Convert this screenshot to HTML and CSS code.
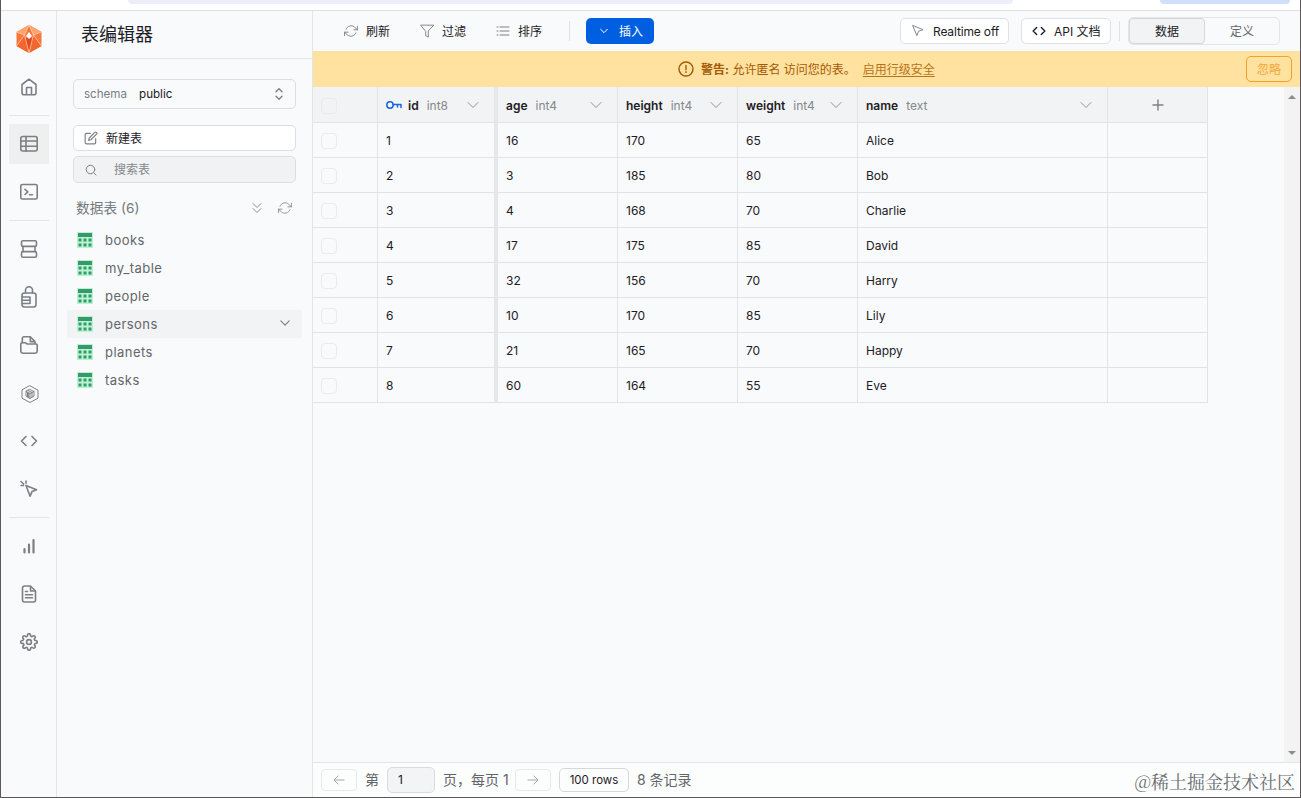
FILE: index.html
```html
<!DOCTYPE html>
<html lang="zh-CN">
<head>
  <meta charset="UTF-8">
  <meta name="viewport" content="width=device-width, initial-scale=1.0">
  <title>表编辑器</title>
  <link rel="stylesheet" href="styles.css">
</head>
<body>
  <svg class="sprite">
    <symbol id="chevron" viewBox="0 0 12 12"><path d="M1 3.500l5 5 5-5"/></symbol>
    <symbol id="refresh" viewBox="0 0 24 24"><path d="M23 4v6h-6M1 20v-6h6"/><path d="M3.500 9a9 9 0 0 1 14.900-3.400L23 10M1 14l4.600 4.400A9 9 0 0 0 20.500 15"/></symbol>
    <symbol id="code" viewBox="0 0 24 24"><path d="M16 18l6-6-6-6M8 6l-6 6 6 6"/></symbol>
    <symbol id="cursor" viewBox="0 0 24 24"><path d="M3 3l7.100 17 2.500-7.400L20 10z"/></symbol>
    <symbol id="table" viewBox="0 0 16 16">
      <rect width="16" height="16" fill="#b9f3d3"/>
      <path fill="#369a68" d="M1 1h14v4H1zM1.500 6.500h3v3h-3zM6.500 6.500h3v3h-3zM11.500 6.500h3v3h-3zM1.500 11.500h3v3h-3zM6.500 11.500h3v3h-3zM11.500 11.500h3v3h-3z"/>
    </symbol>
  </svg>

  <div class="browser">
    <div class="address"></div>
    <div class="update"></div>
  </div>

  <div class="app">
    <nav class="nav">
      <a class="nav-item logo">
        <svg width="26" height="28" viewBox="0 0 26 28">
          <path fill="#f9763d" d="M13 0l12.500 7v14L13 28 .5 21V7z"/>
          <path fill="#fba46c" d="M13 0L.5 7l8 3zM13 0l12.500 7-8 3z"/>
          <path fill="#f5662f" d="M.5 21L8.500 10l4.500 18zM25.500 21l-8-11L13 28z"/>
          <path fill="#df4a1e" d="M13 10l4 5-4 13-4-13z"/>
          <path fill="none" stroke="#ffd0ac" stroke-width=".8" d="M13 0L8.500 10 .5 7M13 0l4.500 10 8-3M8.500 10l-8 11M17.500 10l8 11M8.500 10L13 28l4.500-18"/>
          <path fill="#fff" d="M13 7l3 4-3 3-3-3z"/>
        </svg>
      </a>
      <a class="nav-item">
        <svg class="icon" width="18" height="18" viewBox="0 0 18 18"><path d="M9 1.200L2 6.500v8.300a2 2 0 0 0 2 2h10a2 2 0 0 0 2-2V6.500zM6.500 16.500V9.500h5v7"/></svg>
      </a>
      <hr>
      <a class="nav-item active">
        <svg class="icon" width="18" height="18" viewBox="0 0 18 18"><rect x=".8" y="1.500" width="16.400" height="14.500" rx="2"/><path d="M1 6h16M1 11.300h16M6 1.500V16"/></svg>
      </a>
      <a class="nav-item">
        <svg class="icon" width="18" height="18" viewBox="0 0 18 18"><rect x=".8" y="1.500" width="16.400" height="14.500" rx="1.500"/><path d="M5 6.300l2.800 2.600L5 11.500M9.500 11.800h3"/></svg>
      </a>
      <hr>
      <a class="nav-item">
        <svg class="icon" width="18" height="18" viewBox="0 0 18 18"><rect x="1.500" y=".8" width="15" height="5.600" rx="1.500"/><rect x="1.500" y="11.600" width="15" height="5.600" rx="1.500"/><path d="M3 6.400v5.200M15 6.400v5.200"/></svg>
      </a>
      <a class="nav-item">
        <svg class="icon" width="18" height="22" viewBox="0 0 18 22"><rect x="2" y="7" width="14" height="14" rx="2.500"/><path d="M5.500 7V4.200a3.500 3.500 0 0 1 7 0V7M2 11h8v6.500H2M2 14.300h8"/></svg>
      </a>
      <a class="nav-item">
        <svg class="icon" width="18" height="18" viewBox="0 0 18 18"><path d="M2.300 7V2.800a2 2 0 0 1 2-2h6L15 5.500V8M10.300 1v4.600H15M.8 8a1.200 1.200 0 0 1 1.200-1.200h3.500L7.300 8H16a1.200 1.200 0 0 1 1.200 1.200V15a2.200 2.200 0 0 1-2.200 2.200H3A2.200 2.200 0 0 1 .8 15z"/></svg>
      </a>
      <a class="nav-item functions">
        <svg class="icon thin" width="18" height="18" viewBox="0 0 18 18"><path d="M9 .8l8 4.400v8L9 17.500l-8-4.300v-8z"/><path d="M9 4.500l4 2v4.500l-4 2.500-4-2.500V6.500zM5 6.500l4 2 4-2M9 8.500v5M7 5.500l4 2v4.500M6.500 7.500V12M7.700 8v4.700"/></svg>
      </a>
      <a class="nav-item"><svg class="icon heavy" width="18" height="18"><use href="#code"/></svg></a>
      <a class="nav-item">
        <svg class="icon" width="18" height="18" viewBox="0 0 18 18"><path d="M6 5.500l10.500 4.200-4.500 1.900-1.900 4.600zM1 1.500l2.700 2.500M6 1v2.200M1 5.500h2.500"/></svg>
      </a>
      <hr>
      <a class="nav-item">
        <svg class="icon bars" width="18" height="18" viewBox="0 0 18 18"><path d="M4.500 15.500v-3.500M9 15.500V7.500M13.500 15.500V3"/></svg>
      </a>
      <a class="nav-item">
        <svg class="icon" width="18" height="18" viewBox="0 0 18 18"><path d="M10.500 1H4.500a2 2 0 0 0-2 2v12a2 2 0 0 0 2 2h9a2 2 0 0 0 2-2V6zM10.500 1v5h5M5.500 6.500h2M5.500 9.700h7M5.500 12.800h7"/></svg>
      </a>
      <a class="nav-item">
        <svg class="icon gear" width="18" height="18" viewBox="0 0 24 24"><circle cx="12" cy="12" r="3.200"/><path d="M19.400 15a1.650 1.650 0 0 0 .33 1.820l.06.06a2 2 0 1 1-2.830 2.830l-.06-.06a1.650 1.650 0 0 0-2.800 1.170V21a2 2 0 0 1-4 0v-.09a1.650 1.650 0 0 0-2.900-1.080l-.06.06a2 2 0 1 1-2.830-2.830l.06-.06A1.650 1.650 0 0 0 3.090 14H3a2 2 0 0 1 0-4h.09a1.650 1.650 0 0 0 1.180-2.800l-.06-.06a2 2 0 1 1 2.830-2.830l.06.06A1.650 1.650 0 0 0 10 3.090V3a2 2 0 0 1 4 0v.09a1.650 1.650 0 0 0 2.800 1.180l.06-.06a2 2 0 1 1 2.830 2.830l-.06.06A1.650 1.650 0 0 0 20.910 10H21a2 2 0 0 1 0 4h-.09a1.650 1.650 0 0 0-1.510 1z"/></svg>
      </a>
    </nav>

    <aside class="sidebar">
      <h1 class="sidebar-title">表编辑器</h1>
      <div class="sidebar-body">
        <div class="select">
          <span class="muted">schema</span>
          <span>public</span>
          <svg class="icon" width="10" height="14" viewBox="0 0 10 14"><path d="M2 4.800l3-3 3 3M2 9.200l3 3 3-3"/></svg>
        </div>
        <button class="field new-table">
          <svg class="icon" width="14" height="14" viewBox="0 0 24 24"><path d="M11 4H4a2 2 0 0 0-2 2v14a2 2 0 0 0 2 2h14a2 2 0 0 0 2-2v-7"/><path d="M18.500 2.500a2.100 2.100 0 0 1 3 3L12 15l-4 1 1-4z"/></svg>
          新建表
        </button>
        <div class="field search">
          <svg class="icon" width="12" height="12" viewBox="0 0 24 24"><circle cx="11" cy="11" r="8.500"/><path d="M22 22l-4.500-4.500"/></svg>
          搜索表
        </div>
        <div class="list-head">
          <span>数据表 (6)</span>
          <svg class="icon" width="12" height="14" viewBox="0 0 12 14"><path d="M2 2.500l4 4 4-4M2 7.500l4 4 4-4"/></svg>
          <svg class="icon feather" width="14" height="14"><use href="#refresh"/></svg>
        </div>
        <ul class="tables">
          <li><svg width="16" height="16"><use href="#table"/></svg>books</li>
          <li><svg width="16" height="16"><use href="#table"/></svg>my_table</li>
          <li><svg width="16" height="16"><use href="#table"/></svg>people</li>
          <li class="current"><svg width="16" height="16"><use href="#table"/></svg>persons<svg class="icon arrow" width="10" height="10"><use href="#chevron"/></svg></li>
          <li><svg width="16" height="16"><use href="#table"/></svg>planets</li>
          <li><svg width="16" height="16"><use href="#table"/></svg>tasks</li>
        </ul>
      </div>
    </aside>

    <main class="main">
      <header class="toolbar">
        <button class="tool"><svg class="icon feather" width="14" height="14"><use href="#refresh"/></svg><span>刷新</span></button>
        <button class="tool"><svg class="icon feather" width="14" height="14" viewBox="0 0 24 24"><path d="M23 2H1l8.800 10.500V20l4.400 2.500v-10z"/></svg><span>过滤</span></button>
        <button class="tool"><svg class="icon thin" width="14" height="14" viewBox="0 0 14 14"><path d="M4 3h9M4 7h9M4 11h9M1 3h1M1 7h1M1 11h1"/></svg><span>排序</span></button>
        <span class="line"></span>
        <button class="insert"><svg width="8" height="8"><use href="#chevron"/></svg><span>插入</span></button>
        <div class="toolbar-right">
          <button class="btn realtime"><svg class="icon feather" width="14" height="14"><use href="#cursor"/></svg>Realtime off</button>
          <button class="btn api"><svg class="icon" width="14" height="14"><use href="#code"/></svg><span>API 文档</span></button>
          <span class="line"></span>
          <div class="tabs">
            <button class="tab selected"><span>数据</span></button>
            <button class="tab"><span>定义</span></button>
          </div>
        </div>
      </header>

      <div class="warning">
        <svg class="icon" width="16" height="16" viewBox="0 0 16 16"><circle cx="8" cy="8" r="7"/><path d="M8 4.500v4.200M8 10.800v.6"/></svg>
        <span><b>警告:</b> 允许匿名 访问您的表。</span>
        <a class="rls">启用行级安全</a>
        <button class="dismiss"><span>忽略</span></button>
      </div>

      <div class="content">
        <table class="grid">
          <colgroup><col class="w-check"><col class="w-num"><col class="w-num"><col class="w-num"><col class="w-num"><col class="w-text"><col class="w-add"></colgroup>
          <thead>
            <tr>
              <th><i class="check"></i></th>
              <th class="frozen"><div class="col"><svg class="key" width="16" height="10" viewBox="0 0 16 10"><circle cx="4" cy="5" r="3.200"/><path d="M7.200 4.500H15v3M11.500 4.500v2.500"/></svg>id <span>int8</span><svg class="icon" width="12" height="12"><use href="#chevron"/></svg></div></th>
              <th><div class="col">age <span>int4</span><svg class="icon" width="12" height="12"><use href="#chevron"/></svg></div></th>
              <th><div class="col">height <span>int4</span><svg class="icon" width="12" height="12"><use href="#chevron"/></svg></div></th>
              <th><div class="col">weight <span>int4</span><svg class="icon" width="12" height="12"><use href="#chevron"/></svg></div></th>
              <th><div class="col">name <span>text</span><svg class="icon" width="12" height="12"><use href="#chevron"/></svg></div></th>
              <th><div class="add"><svg class="icon" width="12" height="12" viewBox="0 0 12 12"><path d="M6 1v10M1 6h10"/></svg></div></th>
            </tr>
          </thead>
          <tbody>
            <tr><td><i class="check"></i></td><td class="frozen">1</td><td>16</td><td>170</td><td>65</td><td>Alice</td><td></td></tr>
            <tr><td><i class="check"></i></td><td class="frozen">2</td><td>3</td><td>185</td><td>80</td><td>Bob</td><td></td></tr>
            <tr><td><i class="check"></i></td><td class="frozen">3</td><td>4</td><td>168</td><td>70</td><td>Charlie</td><td></td></tr>
            <tr><td><i class="check"></i></td><td class="frozen">4</td><td>17</td><td>175</td><td>85</td><td>David</td><td></td></tr>
            <tr><td><i class="check"></i></td><td class="frozen">5</td><td>32</td><td>156</td><td>70</td><td>Harry</td><td></td></tr>
            <tr><td><i class="check"></i></td><td class="frozen">6</td><td>10</td><td>170</td><td>85</td><td>Lily</td><td></td></tr>
            <tr><td><i class="check"></i></td><td class="frozen">7</td><td>21</td><td>165</td><td>70</td><td>Happy</td><td></td></tr>
            <tr><td><i class="check"></i></td><td class="frozen">8</td><td>60</td><td>164</td><td>55</td><td>Eve</td><td></td></tr>
          </tbody>
        </table>
        <div class="scrollbar"><i class="up"></i><i class="down"></i></div>
      </div>

      <footer class="footer">
        <button class="page-btn"><svg class="icon" width="12" height="12" viewBox="0 0 12 12"><path d="M11 6H1.500M5 2L1 6l4 4"/></svg></button>
        <span class="label-page">第</span>
        <div class="page-input">1</div>
        <span class="label-per">页，每页 1</span>
        <button class="page-btn"><svg class="icon" width="12" height="12" viewBox="0 0 12 12"><path d="M1 6h9.500M7 2l4 4-4 4"/></svg></button>
        <button class="rows">100 rows</button>
        <span class="label-total">8 条记录</span>
      </footer>
    </main>
  </div>

  <div class="watermark">@稀土掘金技术社区</div>
</body>
</html>
```
FILE: styles.css
```css
* {
  box-sizing: border-box;
}

body {
  display: flex;
  flex-direction: column;

  position: relative;

  width: 1301px;
  height: 798px;

  margin: 0;
  overflow: hidden;

  border: 1px solid #5c5759;
  border-top: none;
  background-color: #f9fafc;
  color: #1c2024;

  font-family: Inter, "Noto Sans CJK SC", sans-serif;
  font-size: 12px;
}

button {
  display: flex;
  align-items: center;
  padding: 0;
  border: none;
  background: none;
  color: inherit;
  font: inherit;
  white-space: nowrap;
}

button span {
  padding-bottom: 2px;
}

svg {
  flex: none;
  fill: none;
  stroke-linecap: round;
  stroke-linejoin: round;
}

.sprite {
  position: absolute;
  width: 0;
  height: 0;
}

.icon {
  stroke: #7c8084;
  stroke-width: 1.4;
}

.nav .icon {
  stroke-width: 1.6;
}

.icon.thin,
.nav .thin {
  stroke-width: 1;
}

.icon.feather {
  stroke-width: 1.6;
}

.nav .heavy,
.nav .bars,
.nav .gear {
  stroke-width: 2.2;
}

.browser {
  display: flex;
  justify-content: space-between;

  flex: none;
  height: 11px;
  padding: 0 10px 0 127px;

  border-bottom: 1px solid #dfdfe1;
  background-color: #fff;
}

.address {
  width: 885px;
  height: 4px;
  border-radius: 0 0 6px 6px;
  background-color: #eceefa;
}

.update {
  width: 130px;
  height: 4px;
  border-radius: 0 0 8px 8px;
  background-color: #d0e0fb;
}

.app {
  display: flex;
  flex: 1;
  min-height: 0;
}

/* left icon bar */

.nav {
  display: flex;
  flex-direction: column;
  align-items: center;
  gap: 8px;

  flex: none;
  width: 56px;
  padding-top: 8px;

  border-right: 1px solid #e3e5e7;
}

.nav-item {
  display: flex;
  align-items: center;
  justify-content: center;

  width: 40px;
  height: 40px;
}

.functions {
  padding: 2px 0 0 2px;
}

.nav hr {
  width: 40px;
  height: 1px;
  margin: 0;
  border: none;
  background-color: #e3e5e7;
}

.active {
  background-color: #eeefef;
}

/* table list */

.sidebar {
  flex: none;
  width: 256px;
  border-right: 1px solid #e3e5e7;
}

.sidebar-title {
  height: 48px;
  margin: 0;
  padding-left: 24px;

  border-bottom: 1px solid #e3e5e7;

  font-size: 18px;
  font-weight: 400;
  line-height: 47px;
}

.sidebar-body {
  padding: 20px 16px 0;
}

.muted {
  color: #7a7e82;
}

.select {
  display: flex;
  align-items: center;
  gap: 12px;

  height: 30px;
  padding: 0 11px 0 10px;

  border: 1px solid #dcdfe1;
  border-radius: 5px;

  font-size: 11.6px;
}

.select .icon {
  margin-left: auto;
}

.field {
  display: flex;
  align-items: center;

  width: 100%;
  height: 27px;
  padding-bottom: 2px;

  border: 1px solid #dcdfe1;
  border-radius: 5px;
}

.new-table {
  gap: 8px;
  height: 26px;
  margin-top: 16px;
  padding-left: 10px;
  background-color: #fff;
}

.field .icon {
  margin-top: 2px;
  stroke-width: 2;
}

.search {
  gap: 17px;
  margin-top: 5px;
  padding-left: 11px;
  background-color: #f0f2f3;
  color: #84888c;
}

.list-head {
  display: flex;
  align-items: center;
  gap: 15px;

  height: 26px;
  margin-top: 12px;
  padding: 0 4px 0 3px;

  color: #75797d;
  font-size: 13.700px;
}

.list-head span {
  margin-right: auto;
  padding-bottom: 2px;
}

.list-head .icon {
  stroke: #8b8f93;
}

.list-head .icon:not(.feather) {
  stroke-width: 1;
}

.tables {
  margin: 5px -6px 0;
  padding: 0;
  list-style: none;

  color: #626669;
  font-size: 13px;
  letter-spacing: .45px;
  line-height: 26px;
}

.tables li {
  display: flex;
  align-items: center;
  gap: 12px;

  height: 28px;
  padding: 0 12px 1px 10px;
}

.tables svg {
  margin-top: 1px;
}

.current {
  background-color: #f2f3f4;
}

.tables .arrow {
  margin-top: -2px;
  margin-left: auto;
}

/* toolbar */

.main {
  display: flex;
  flex-direction: column;
  flex: 1;
  min-width: 0;
}

.toolbar {
  display: flex;
  align-items: center;

  flex: none;
  height: 40px;
  padding: 0 20px 0 31px;
}

.tool {
  gap: 8px;
  width: 76px;
}

.line {
  width: 1px;
  height: 20px;
  background-color: #dfe1e3;
}

.tool + .line {
  margin-left: -3px;
}

.insert {
  gap: 11px;

  width: 68px;
  height: 26px;
  margin-left: 16px;
  padding-left: 14px;

  border-radius: 5px;
  background-color: #005fe0;
  color: #fff;
}

.insert svg {
  stroke: #fff;
  stroke-width: 1.5;
}

.toolbar-right {
  display: flex;
  align-items: center;
  margin-left: auto;
}

.btn {
  gap: 8px;

  height: 26px;
  padding-left: 10px;

  border: 1px solid #dfe1e3;
  border-radius: 5px;
  background-color: #fff;
}

.realtime {
  width: 109px;
  margin-right: 12px;
  letter-spacing: -.15px;
}

.api {
  width: 90px;
  margin-right: 8px;
}

.api .icon {
  stroke: #1c2024;
  stroke-width: 2.400;
}

.tabs {
  display: flex;

  width: 152px;
  height: 28px;
  margin-left: 8px;

  border: 1px solid #e3e5e7;
  border-radius: 5px;
}

.tab {
  justify-content: center;
  flex: 1;
  color: #626669;
}

.selected {
  border: 1px solid #d5d8da;
  border-radius: 4px;
  background-color: #f1f3f4;
  color: #1c2024;
}

.warning {
  display: flex;
  align-items: center;

  flex: none;
  height: 36px;
  padding: 0 8px 0 365px;

  background-color: #ffe1a0;
  color: #a35a04;
}

.warning > span,
.warning > a {
  padding-bottom: 2px;
}

.warning .icon {
  margin-right: 7px;
  stroke: #a35a04;
}

.rls {
  margin-left: 7px;
  color: #b97219;
  text-decoration: underline;
  text-underline-offset: 2px;
}

.dismiss {
  justify-content: center;

  width: 46px;
  height: 26px;
  margin-left: auto;

  border: 1px solid #f0a02c;
  border-radius: 5px;
  color: #f0a93c;
}

/* data grid */

.content {
  display: flex;
  justify-content: space-between;
  flex: 1;
  min-height: 0;
}

.grid {
  width: 895px;
  height: 316px;
  table-layout: fixed;
  border-collapse: separate;
  border-spacing: 0;
}

.w-check {
  width: 65px;
}

.w-num {
  width: 120px;
}

.w-text {
  width: 250px;
}

.w-add {
  width: 100px;
}

.grid th,
.grid td {
  height: 35px;
  padding: 1px 8px 0;

  border-right: 1px solid #e1e3e5;
  border-bottom: 1px solid #e1e3e5;

  text-align: left;
}

.grid th {
  height: 36px;
  background-color: #f2f3f4;
}

.grid .frozen {
  border-right: 4px solid #e6e7e9;
}

.col {
  display: flex;
  align-items: center;
  font-weight: 600;
}

.col span {
  margin-left: 8px;
  color: #84888c;
  font-weight: 400;
}

.col .icon {
  margin-left: auto;
  margin-right: 7px;
  stroke: #909498;
  stroke-width: 1;
}

.key {
  margin-right: 6px;
  stroke: #1668dc;
  stroke-width: 1.5;
}

.add {
  display: flex;
  justify-content: center;
}

.check {
  display: block;
  width: 16px;
  height: 16px;
  margin-top: 1px;
  border: 1px solid #e9ebec;
  border-radius: 4px;
}

.scrollbar {
  display: flex;
  flex-direction: column;
  align-items: center;
  justify-content: space-between;

  width: 16px;
  padding: 8px 0 7px;

  background-color: #f3f3f4;
}

.up,
.down {
  border: 4px solid transparent;
}

.up {
  border-top: none;
  border-bottom-color: #8a8c8e;
}

.down {
  border-bottom: none;
  border-top-color: #8a8c8e;
}

/* pagination */

.footer {
  display: flex;
  align-items: center;

  flex: none;
  height: 35px;
  padding-left: 8px;

  border-top: 1px solid #e3e5e7;
  background-color: #fcfdfd;

  color: #626669;
  font-size: 14px;
}

.page-btn {
  justify-content: center;
  width: 36px;
  height: 22px;
  border: 1px solid #e6e8ea;
  border-radius: 4px;
}

.page-btn .icon {
  stroke: #a4a8ab;
  stroke-width: 1;
}

.label-page,
.label-per,
.label-total {
  padding-bottom: 3px;
}

.label-page {
  margin: 0 8px;
}

.page-input {
  width: 48px;
  height: 26px;
  padding-left: 10px;

  border: 1px solid #d9dcde;
  border-radius: 5px;
  background-color: #f3f4f5;
  color: #1c2024;

  font-size: 12px;
  line-height: 24px;
}

.label-per {
  width: 64px;
  margin: 0 8px;
  white-space: nowrap;
}

.rows {
  justify-content: center;

  width: 70px;
  height: 24px;
  margin: 0 8px;

  border: 1px solid #d5d8da;
  border-radius: 5px;
  color: #1c2024;

  font-size: 11.500px;
}

.watermark {
  position: absolute;
  right: 5px;
  bottom: 4px;

  color: #6a6d70;

  font-family: "Noto Serif CJK SC", "Liberation Serif", "Noto Sans CJK SC", serif;
  font-size: 18px;
  line-height: 24px;
}
```
